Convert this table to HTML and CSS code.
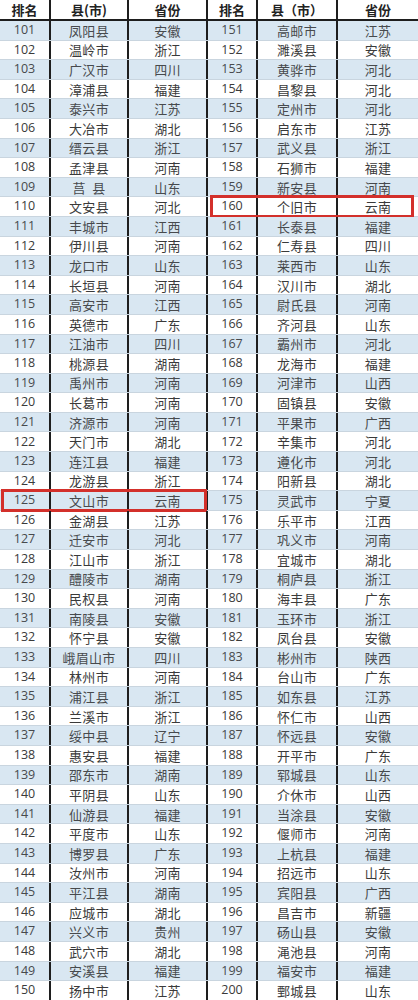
FILE: index.html
```html
<!DOCTYPE html>
<html lang="zh-CN">
<head>
<meta charset="utf-8">
<title>排名</title>
<link rel="stylesheet" href="styles.css">
</head>
<body>
<div class="table">
  <div class="half left">
    <div class="row head"><span>排名</span><span>县(市)</span><span>省份</span></div>
    <div class="row"><span>101</span><span>凤阳县</span><span>安徽</span></div>
    <div class="row"><span>102</span><span>温岭市</span><span>浙江</span></div>
    <div class="row"><span>103</span><span>广汉市</span><span>四川</span></div>
    <div class="row"><span>104</span><span>漳浦县</span><span>福建</span></div>
    <div class="row"><span>105</span><span>泰兴市</span><span>江苏</span></div>
    <div class="row"><span>106</span><span>大冶市</span><span>湖北</span></div>
    <div class="row"><span>107</span><span>缙云县</span><span>浙江</span></div>
    <div class="row"><span>108</span><span>孟津县</span><span>河南</span></div>
    <div class="row"><span>109</span><span>莒&nbsp;&nbsp;县</span><span>山东</span></div>
    <div class="row"><span>110</span><span>文安县</span><span>河北</span></div>
    <div class="row"><span>111</span><span>丰城市</span><span>江西</span></div>
    <div class="row"><span>112</span><span>伊川县</span><span>河南</span></div>
    <div class="row"><span>113</span><span>龙口市</span><span>山东</span></div>
    <div class="row"><span>114</span><span>长垣县</span><span>河南</span></div>
    <div class="row"><span>115</span><span>高安市</span><span>江西</span></div>
    <div class="row"><span>116</span><span>英德市</span><span>广东</span></div>
    <div class="row"><span>117</span><span>江油市</span><span>四川</span></div>
    <div class="row"><span>118</span><span>桃源县</span><span>湖南</span></div>
    <div class="row"><span>119</span><span>禹州市</span><span>河南</span></div>
    <div class="row"><span>120</span><span>长葛市</span><span>河南</span></div>
    <div class="row"><span>121</span><span>济源市</span><span>河南</span></div>
    <div class="row"><span>122</span><span>天门市</span><span>湖北</span></div>
    <div class="row"><span>123</span><span>连江县</span><span>福建</span></div>
    <div class="row"><span>124</span><span>龙游县</span><span>浙江</span></div>
    <div class="row hl hl-left"><span>125</span><span>文山市</span><span>云南</span></div>
    <div class="row"><span>126</span><span>金湖县</span><span>江苏</span></div>
    <div class="row"><span>127</span><span>迁安市</span><span>河北</span></div>
    <div class="row"><span>128</span><span>江山市</span><span>浙江</span></div>
    <div class="row"><span>129</span><span>醴陵市</span><span>湖南</span></div>
    <div class="row"><span>130</span><span>民权县</span><span>河南</span></div>
    <div class="row"><span>131</span><span>南陵县</span><span>安徽</span></div>
    <div class="row"><span>132</span><span>怀宁县</span><span>安徽</span></div>
    <div class="row"><span>133</span><span>峨眉山市</span><span>四川</span></div>
    <div class="row"><span>134</span><span>林州市</span><span>河南</span></div>
    <div class="row"><span>135</span><span>浦江县</span><span>浙江</span></div>
    <div class="row"><span>136</span><span>兰溪市</span><span>浙江</span></div>
    <div class="row"><span>137</span><span>绥中县</span><span>辽宁</span></div>
    <div class="row"><span>138</span><span>惠安县</span><span>福建</span></div>
    <div class="row"><span>139</span><span>邵东市</span><span>湖南</span></div>
    <div class="row"><span>140</span><span>平阴县</span><span>山东</span></div>
    <div class="row"><span>141</span><span>仙游县</span><span>福建</span></div>
    <div class="row"><span>142</span><span>平度市</span><span>山东</span></div>
    <div class="row"><span>143</span><span>博罗县</span><span>广东</span></div>
    <div class="row"><span>144</span><span>汝州市</span><span>河南</span></div>
    <div class="row"><span>145</span><span>平江县</span><span>湖南</span></div>
    <div class="row"><span>146</span><span>应城市</span><span>湖北</span></div>
    <div class="row"><span>147</span><span>兴义市</span><span>贵州</span></div>
    <div class="row"><span>148</span><span>武穴市</span><span>湖北</span></div>
    <div class="row"><span>149</span><span>安溪县</span><span>福建</span></div>
    <div class="row"><span>150</span><span>扬中市</span><span>江苏</span></div>
  </div>
  <div class="half right">
    <div class="row head"><span>排名</span><span>县（市）</span><span>省份</span></div>
    <div class="row"><span>151</span><span>高邮市</span><span>江苏</span></div>
    <div class="row"><span>152</span><span>濉溪县</span><span>安徽</span></div>
    <div class="row"><span>153</span><span>黄骅市</span><span>河北</span></div>
    <div class="row"><span>154</span><span>昌黎县</span><span>河北</span></div>
    <div class="row"><span>155</span><span>定州市</span><span>河北</span></div>
    <div class="row"><span>156</span><span>启东市</span><span>江苏</span></div>
    <div class="row"><span>157</span><span>武义县</span><span>浙江</span></div>
    <div class="row"><span>158</span><span>石狮市</span><span>福建</span></div>
    <div class="row"><span>159</span><span>新安县</span><span>河南</span></div>
    <div class="row hl hl-right"><span>160</span><span>个旧市</span><span>云南</span></div>
    <div class="row"><span>161</span><span>长泰县</span><span>福建</span></div>
    <div class="row"><span>162</span><span>仁寿县</span><span>四川</span></div>
    <div class="row"><span>163</span><span>莱西市</span><span>山东</span></div>
    <div class="row"><span>164</span><span>汉川市</span><span>湖北</span></div>
    <div class="row"><span>165</span><span>尉氏县</span><span>河南</span></div>
    <div class="row"><span>166</span><span>齐河县</span><span>山东</span></div>
    <div class="row"><span>167</span><span>霸州市</span><span>河北</span></div>
    <div class="row"><span>168</span><span>龙海市</span><span>福建</span></div>
    <div class="row"><span>169</span><span>河津市</span><span>山西</span></div>
    <div class="row"><span>170</span><span>固镇县</span><span>安徽</span></div>
    <div class="row"><span>171</span><span>平果市</span><span>广西</span></div>
    <div class="row"><span>172</span><span>辛集市</span><span>河北</span></div>
    <div class="row"><span>173</span><span>遵化市</span><span>河北</span></div>
    <div class="row"><span>174</span><span>阳新县</span><span>湖北</span></div>
    <div class="row"><span>175</span><span>灵武市</span><span>宁夏</span></div>
    <div class="row"><span>176</span><span>乐平市</span><span>江西</span></div>
    <div class="row"><span>177</span><span>巩义市</span><span>河南</span></div>
    <div class="row"><span>178</span><span>宜城市</span><span>湖北</span></div>
    <div class="row"><span>179</span><span>桐庐县</span><span>浙江</span></div>
    <div class="row"><span>180</span><span>海丰县</span><span>广东</span></div>
    <div class="row"><span>181</span><span>玉环市</span><span>浙江</span></div>
    <div class="row"><span>182</span><span>凤台县</span><span>安徽</span></div>
    <div class="row"><span>183</span><span>彬州市</span><span>陕西</span></div>
    <div class="row"><span>184</span><span>台山市</span><span>广东</span></div>
    <div class="row"><span>185</span><span>如东县</span><span>江苏</span></div>
    <div class="row"><span>186</span><span>怀仁市</span><span>山西</span></div>
    <div class="row"><span>187</span><span>怀远县</span><span>安徽</span></div>
    <div class="row"><span>188</span><span>开平市</span><span>广东</span></div>
    <div class="row"><span>189</span><span>郓城县</span><span>山东</span></div>
    <div class="row"><span>190</span><span>介休市</span><span>山西</span></div>
    <div class="row"><span>191</span><span>当涂县</span><span>安徽</span></div>
    <div class="row"><span>192</span><span>偃师市</span><span>河南</span></div>
    <div class="row"><span>193</span><span>上杭县</span><span>福建</span></div>
    <div class="row"><span>194</span><span>招远市</span><span>山东</span></div>
    <div class="row"><span>195</span><span>宾阳县</span><span>广西</span></div>
    <div class="row"><span>196</span><span>昌吉市</span><span>新疆</span></div>
    <div class="row"><span>197</span><span>砀山县</span><span>安徽</span></div>
    <div class="row"><span>198</span><span>渑池县</span><span>河南</span></div>
    <div class="row"><span>199</span><span>福安市</span><span>福建</span></div>
    <div class="row"><span>200</span><span>鄄城县</span><span>山东</span></div>
  </div>
</div>
</body>
</html>
```
FILE: styles.css
```css
* { box-sizing: border-box; }
html, body { margin: 0; padding: 0; background: #ffffff; }
body {
  font-family: "Noto Sans CJK SC", "Noto Sans", sans-serif;
  color: #3a3a3a;
}
.table {
  display: flex;
  width: 418px;
  height: 1000px;
  overflow: hidden;
}
.half {
  display: flex;
  flex-direction: column;
  height: 1000px;
}
.left { width: 208px; }
.right { width: 210px; }
.row {
  flex: 1 1 0;
  min-height: 0;
  display: grid;
  border-bottom: 1px solid #c9d5df;
  position: relative;
}
.left .row { grid-template-columns: 51px 78px 79px; }
.right .row { grid-template-columns: 50px 80px 80px; }
.row:nth-child(even) { background: #d9e7f2; color: #474a4d; }
.row:last-child { border-bottom: none; }
.row span {
  display: flex;
  align-items: center;
  justify-content: center;
  font-size: 13px;
  letter-spacing: 0.3px;
  line-height: 1;
  white-space: nowrap;
  border-right: 2px solid #1e1e1e;
}
.right .row span:last-child { border-right: none; }
.row span:first-child {
  font-family: "Open Sans", "Liberation Sans", sans-serif;
  font-size: 12.5px;
  letter-spacing: 0;
}
.row.head {
  flex: 0 0 21px;
  background: #ffffff;
  border-bottom: 2px solid #1e1e1e;
}
.row.head span,
.row.head span:first-child {
  font-family: "Noto Sans CJK SC", sans-serif;
  font-weight: 700;
  font-size: 13px;
  letter-spacing: 0;
  color: #222;
}
.hl::after {
  content: "";
  position: absolute;
  top: -2px;
  bottom: -2px;
  border: 3px solid #d3302b;
  pointer-events: none;
}
.hl-left::after { left: 1px; right: 1px; }
.hl-right::after { left: 2px; right: 4px; }
```
